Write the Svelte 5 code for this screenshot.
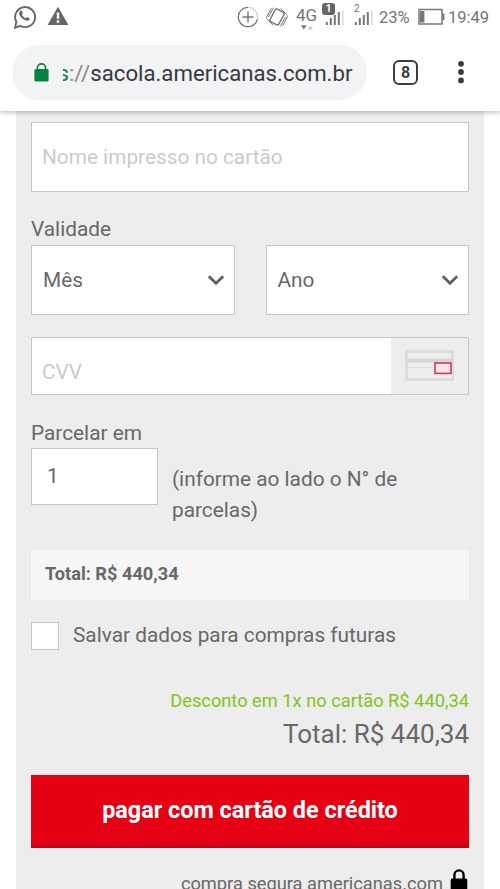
<script lang="ts">
  const url = "sacola.americanas.com.br";
  const total = "R$ 440,34";
  const selects = ["Mês", "Ano"];
  const bars = [3, 7, 10, 13];

  let name = "";
  let cvv = "";
  let installments = "1";
  let save = false;
</script>

<div class="screen">
  <header>
    <div class="status">
      <svg class="whatsapp" width="24" height="26" viewBox="0 0 24 26">
        <path d="M2.9 24.9 4.4 19A10 10 0 1 1 8.2 22.8Z" fill="none" stroke="#686868" stroke-width="1.9" stroke-linejoin="round" />
        <path d="M8.4 7.8c.5-.5 1.2-.5 1.5.1l.8 2.1c.2.5-.5 1.1-.8 1.6.9 1.8 2.1 2.9 3.9 3.7.5-.5 1-1.3 1.5-1.1l2.1 1c.6.3.3 1.4-.2 1.8-1.2 1.2-3.2.8-5-.3-2.1-1.2-3.9-3-4.7-4.9-.6-1.5-.3-3 .9-4Z" fill="#686868" />
      </svg>
      <svg class="warning" width="22" height="20" viewBox="0 0 22 20">
        <path d="M11 .8 21.4 19H.6Z" fill="#666" />
        <path d="M11 6.5v6.2M11 14.3v2.5" stroke="#fff" stroke-width="2.4" />
      </svg>
      <svg class="data-saver" width="22" height="22" viewBox="0 0 22 22" fill="none" stroke="#777">
        <circle cx="11" cy="11" r="9.7" stroke="#ccc" stroke-width="1.1" />
        <path d="M11 1.3a9.7 9.7 0 1 0 9.4 12" stroke-width="1.3" />
        <path d="M11 5.5v11M5.5 11h11" stroke-width="1.4" />
      </svg>
      <svg class="vibrate" width="24" height="22" viewBox="0 0 24 22" fill="none" stroke="#777" stroke-width="1.5">
        <rect x="7" y="4" width="10" height="14" rx="1.5" transform="rotate(28 12 11)" />
        <path d="m6.3 2.3-5 9.5M8.6 1.6 3.4 11M1.6 12.4l6.7 7.2M22.7 10.2l-5 9.5M20.6 11l-5.2 9.4M15.7 2.4l6.7 7.2" stroke-width="1" />
      </svg>
      <div class="network">
        <span>4G</span>
        <svg width="14" height="5" viewBox="0 0 14 5">
          <path d="M1 .3h5.6L3.8 4.7Z" fill="#777" />
          <path d="M7.6 4.5H13L10.3.5Z" fill="#ccc" />
        </svg>
      </div>
      {#each ["1", "2"] as sim}
        <div class="signal" class:second={sim === "2"}>
          <span class:active={sim === "1"}>{sim}</span>
          <svg width="20" height="16" viewBox="0 0 20 16">
            {#each bars as height, i}
              <rect x={i * 4 + 0.8} y={15 - height} width="2" {height} fill="#777" />
            {/each}
            <rect x="17" y="0" width="1.6" height="15" fill="#ddd" />
          </svg>
        </div>
      {/each}
      <span class="percent">23%</span>
      <svg class="battery" width="27" height="18" viewBox="0 0 27 18">
        <rect x="1" y="1.5" width="23" height="14.5" fill="none" stroke="#777" stroke-width="1.5" />
        <rect x="2" y="3" width="4.4" height="11.5" fill="#777" />
        <rect x="24.4" y="5.5" width="2" height="6.5" fill="#777" />
      </svg>
      <span class="clock">19:49</span>
    </div>

    <div class="toolbar">
      <div class="address">
        <svg width="15" height="19" viewBox="0 0 15 19">
          <path d="M3.4 8V5a4.1 4.1 0 0 1 8.2 0v3" fill="none" stroke="#0b8043" stroke-width="1.6" />
          <rect x=".4" y="6" width="14.2" height="12.5" rx="1.5" fill="#0b8043" />
        </svg>
        <span class="url"><span class="clip"><b>s</b></span><i>://</i>{url}</span>
      </div>
      <div class="tabs">8</div>
      <svg class="menu" width="8" height="24" viewBox="0 0 8 24" fill="#3c3c3c">
        <circle cx="4" cy="3.8" r="2.9" />
        <circle cx="4" cy="12" r="2.9" />
        <circle cx="4" cy="20.4" r="2.9" />
      </svg>
    </div>
  </header>

  <main>
    <input class="field name" type="text" placeholder="Nome impresso no cartão" bind:value={name} />

    <div class="label validity">Validade</div>
    <div class="selects">
      {#each selects as option}
        <div class="field select">
          <span>{option}</span>
          <svg width="18" height="12" viewBox="0 0 18 12">
            <path d="m1.8 2.2 7.2 7 7.2-7" fill="none" stroke="#606060" stroke-width="2.8" />
          </svg>
        </div>
      {/each}
    </div>

    <div class="field cvv">
      <input type="text" placeholder="CVV" bind:value={cvv} />
      <div class="card">
        <svg width="50" height="32" viewBox="0 0 50 32">
          <rect x="1.5" y="1.5" width="46" height="28" fill="#eee" stroke="#dadada" stroke-width="2.6" />
          <path d="M2 10.5h45" stroke="#d6d6d6" stroke-width="4" />
          <path d="M4 17.5h24" stroke="#dfdfdf" stroke-width="1.4" />
          <rect x="30" y="13" width="16" height="10.4" fill="#f5e6e8" stroke="#cf3b54" stroke-width="1.6" />
        </svg>
      </div>
    </div>

    <div class="label parcel">Parcelar em</div>
    <div class="installments">
      <input class="field" type="text" bind:value={installments} />
      <p>(informe ao lado o N° de<br />parcelas)</p>
    </div>

    <div class="subtotal"><span>Total: {total}</span></div>

    <label class="save">
      <input type="checkbox" bind:checked={save} />
      <span>Salvar dados para compras futuras</span>
    </label>

    <div class="discount"><span>Desconto em 1x no cartão {total}</span></div>
    <div class="total"><span>Total: {total}</span></div>

    <button type="button"><span>pagar com cartão de crédito</span></button>

    <div class="secure">
      <span>compra segura americanas.com</span>
      <svg width="18" height="24" viewBox="0 0 18 24">
        <path d="M4.4 11V6a4.6 4.6 0 0 1 9.2 0v5" fill="none" stroke="#000" stroke-width="2.4" />
        <rect x=".7" y="9.5" width="16.6" height="14" rx="1.5" fill="#000" />
      </svg>
    </div>
  </main>
</div>

<style>
  :global(body) {
    background: #fff;
  }

  .screen,
  .screen * {
    box-sizing: border-box;
  }

  .screen {
    width: 500px;
    height: 889px;
    overflow: hidden;
    background: #fefefe;
    color: #686868;
    font-family: Roboto, "Liberation Sans", sans-serif;
    font-size: 20.8px;
  }

  svg {
    display: block;
    flex: none;
  }

  input,
  button {
    font: inherit;
    color: inherit;
    border-radius: 0;
    outline: none;
  }

  header {
    position: relative;
    height: 111px;
    background: #fff;
    box-shadow: 0 1px 5px rgba(0, 0, 0, 0.3);
  }

  .status {
    display: flex;
    align-items: center;
    height: 34px;
    padding-left: 12px;
    color: #747474;
    font-size: 17px;
    white-space: nowrap;
  }

  .whatsapp {
    margin-bottom: 3px;
  }

  .warning {
    margin: 0 0 2px 11px;
  }

  .data-saver {
    margin: 0 0 1px 168px;
  }

  .vibrate {
    margin: 0 0 1px 6px;
  }

  .network {
    width: 22px;
    height: 26px;
    margin-left: 7px;
    padding-top: 2px;
    font-size: 17px;
    line-height: 18px;
  }

  .network span {
    display: block;
  }

  .network svg {
    margin: 1px 0 0 4px;
  }

  .signal {
    position: relative;
    width: 21px;
    height: 26px;
    margin-left: 7px;
    padding-top: 6px;
  }

  .signal.second {
    margin-left: 8px;
  }

  .signal span {
    position: absolute;
    top: -1px;
    left: 0;
    font-size: 10px;
    line-height: 12px;
  }

  .signal span.active {
    left: -3px;
    width: 13px;
    border-radius: 3px;
    background: #666;
    color: #fff;
    font-weight: 700;
    text-align: center;
  }

  .percent {
    width: 31px;
    margin-left: 4px;
    font-size: 16.5px;
  }

  .battery {
    margin-left: 8px;
  }

  .clock {
    margin-left: 3px;
    font-size: 16.5px;
  }

  .toolbar {
    display: flex;
    align-items: center;
    height: 77px;
    padding-left: 12px;
  }

  .address {
    display: flex;
    align-items: center;
    width: 355px;
    height: 55px;
    padding-left: 22px;
    border-radius: 28px;
    background: #f1f3f4;
  }

  .url {
    display: flex;
    margin: 1px 0 0 14px;
    color: #37393c;
    font-size: 22.2px;
    white-space: nowrap;
  }

  .clip {
    display: flex;
    justify-content: flex-end;
    width: 6px;
    overflow: hidden;
  }

  .clip b {
    color: #0b8043;
    font-weight: 400;
  }

  .url i {
    color: #888;
    font-style: normal;
  }

  .tabs {
    width: 25px;
    height: 25px;
    margin: 0 0 1px 26px;
    border: 2.5px solid #3c3c3c;
    border-radius: 6px;
    color: #3c3c3c;
    font-size: 16px;
    font-weight: 700;
    line-height: 22px;
    text-align: center;
  }

  .menu {
    margin: 0 0 1px 39px;
  }

  main {
    width: 468px;
    height: 778px;
    margin: 0 16px;
    padding: 11px 15px 0;
    overflow: hidden;
    background: #ededed;
  }

  .field {
    border: 1px solid #c6c6c6;
    background: #fff;
  }

  input::placeholder {
    color: #cbcbcb;
    opacity: 1;
  }

  .name {
    display: block;
    width: 438px;
    height: 70px;
    padding: 0 10px;
  }

  .label {
    height: 30px;
    line-height: 30px;
  }

  .validity {
    margin-top: 22px;
  }

  .selects {
    display: flex;
    gap: 31px;
    margin-top: 1px;
  }

  .select {
    display: flex;
    flex: 1;
    align-items: center;
    justify-content: space-between;
    height: 70px;
    padding: 0 9px 1px 11px;
  }

  .cvv {
    display: flex;
    height: 58px;
    margin-top: 22px;
  }

  .cvv input {
    width: 359px;
    padding: 11px 10px 0;
    border: 0;
    background: #fff;
  }

  .card {
    flex: 1;
    padding: 12px 0 0 14px;
    background: #ededed;
  }

  .parcel {
    margin-top: 23px;
  }

  .installments {
    display: flex;
    height: 57px;
  }

  .installments input {
    width: 127px;
    padding: 0 15px 1px;
  }

  .installments p {
    margin: 16px 0 0 14px;
    line-height: 31px;
    white-space: nowrap;
  }

  .subtotal {
    height: 50px;
    margin-top: 45px;
    padding-left: 14px;
    background: #f6f6f6;
    font-size: 18.2px;
    font-weight: 700;
    line-height: 48px;
  }

  .save {
    display: flex;
    height: 28px;
    margin-top: 22px;
    line-height: 26px;
  }

  .save input {
    width: 28px;
    height: 28px;
    margin: 0 14px 0 0;
    appearance: none;
    border: 1.5px solid #c6c6c6;
    background: #fff;
  }

  .discount {
    height: 24px;
    margin-top: 39px;
    color: #84c41c;
    font-size: 18.25px;
    line-height: 24px;
    text-align: right;
  }

  .total {
    height: 36px;
    margin-top: 3px;
    font-size: 26px;
    line-height: 36px;
    text-align: right;
  }

  button {
    display: block;
    width: 438px;
    height: 73px;
    margin-top: 23px;
    padding: 0;
    border: 0;
    border-bottom: 3px solid #ba0817;
    background: #e60014;
    color: #fff;
    font-size: 23.4px;
    font-weight: 700;
  }

  .secure {
    display: flex;
    justify-content: flex-end;
    height: 28px;
    margin-top: 21px;
    font-size: 18.25px;
    line-height: 28px;
  }

  .secure span {
    padding-top: 1px;
  }

  .secure svg {
    margin: 0 1px 0 7px;
  }
</style>
